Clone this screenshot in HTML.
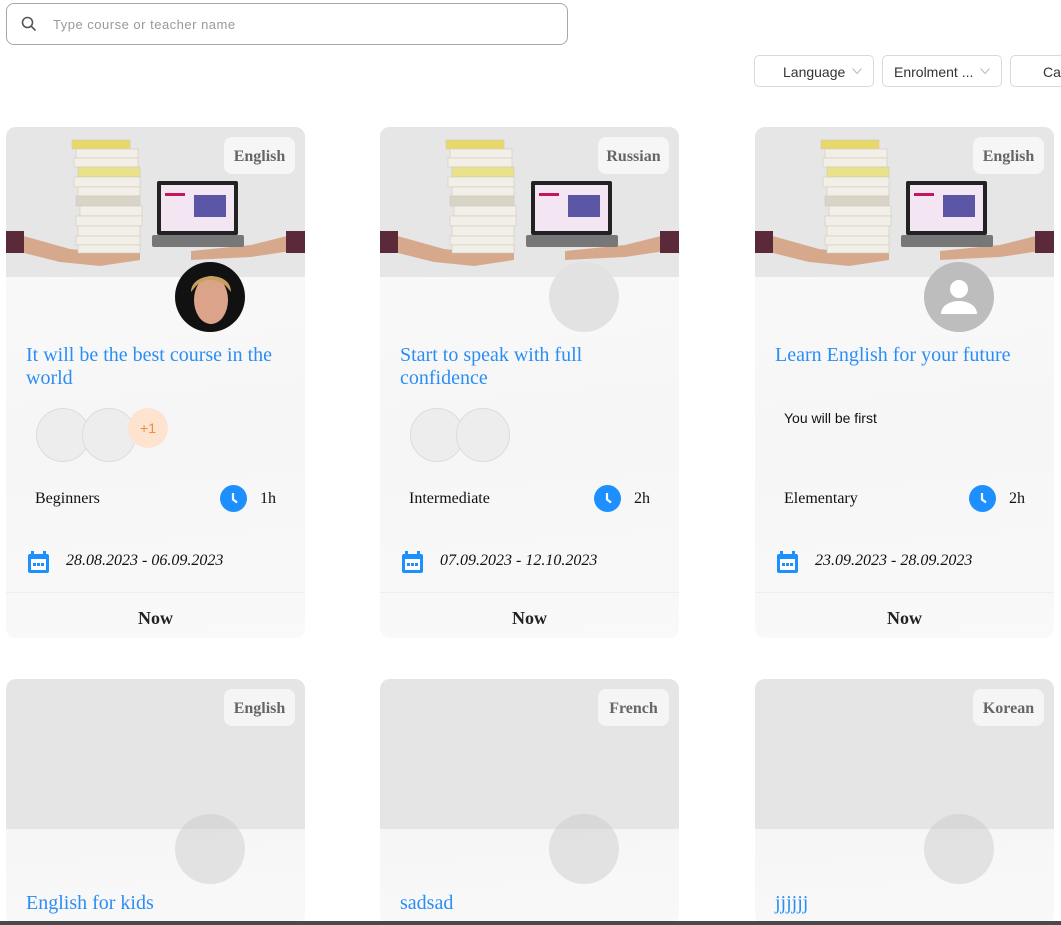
<!DOCTYPE html>
<html style="overflow:hidden;width:1061px;height:925px"><head><meta charset="utf-8"><style>
*{box-sizing:border-box;margin:0;padding:0}
body{width:1061px;height:925px;overflow:hidden;background:#fff;position:relative;font-family:"Liberation Serif",serif}
.search{position:absolute;left:6px;top:3px;width:562px;height:42px;border:1px solid #a8a8a8;border-radius:8px}
.search span{position:absolute;left:46px;top:13px;font:13px "Liberation Sans",sans-serif;color:#999;letter-spacing:.5px}
.sel{position:absolute;top:55px;height:32px;border:1px solid #d9d9d9;border-radius:5px;font:14px "Liberation Sans",sans-serif;color:#333}
.sel span{position:absolute;top:8px}
.card{position:absolute;width:299px;border-radius:10px;overflow:hidden;background:linear-gradient(175deg,#fbfbfb,#f6f6f6 60%,#f9f9f9)}
.img{position:absolute;left:0;top:0;width:299px;height:150px;background:#e5e5e5}
.tag{position:absolute;right:10px;top:10px;width:71px;height:37px;border-radius:8px;background:rgba(248,248,248,.85);font-weight:bold;font-size:16px;color:#666;text-align:center;line-height:39px}
.av{position:absolute;left:169px;top:135px;width:70px;height:70px;border-radius:50%;overflow:hidden}
.title{position:absolute;left:20px;top:217px;width:262px;font-size:20px;line-height:23px;color:#2a8ef5}
.p{position:absolute;top:281px;width:54px;height:54px;border-radius:50%;background:#ededed;border:1.5px solid #dcdcdc}
.lvl{position:absolute;left:29px;top:363px;font-size:16px;color:#111}
.clk{position:absolute;left:214px;top:358px;width:27px;height:27px;border-radius:50%;background:#1e8fff}
.hr{position:absolute;left:254px;top:363px;font-size:16px;color:#111}
.cal{position:absolute;left:22px;top:424px}
.date{position:absolute;left:60px;top:425px;font-size:16px;font-style:italic;color:#111}
.div{position:absolute;left:0;top:465px;width:299px;border-top:1px solid #eee}
.now{position:absolute;left:0;top:481px;width:299px;text-align:center;font-weight:bold;font-size:18px;color:#222}
</style></head><body>
<div class="search"><svg style="position:absolute;left:14px;top:12px" width="16" height="16" viewBox="0 0 16 16"><circle cx="6.5" cy="6.5" r="5" fill="none" stroke="#555" stroke-width="1.6"/><path d="M10.2 10.2L14.5 14.5" stroke="#555" stroke-width="1.6"/></svg><span>Type course or teacher name</span></div>
<div class="sel" style="left:754px;width:120px"><span style="left:28px">Language</span><svg style="position:absolute;left:97px;top:12px" width="10" height="7"><path d="M0.5 0.5L5 5.5L9.5 0.5" fill="none" stroke="#bbb"/></svg></div>
<div class="sel" style="left:882px;width:120px"><span style="left:11px">Enrolment ...</span><svg style="position:absolute;left:97px;top:12px" width="10" height="7"><path d="M0.5 0.5L5 5.5L9.5 0.5" fill="none" stroke="#bbb"/></svg></div>
<div class="sel" style="left:1010px;width:80px"><span style="left:32px">Cat</span></div>

<div class="card" style="left:6px;top:127px;height:511px">
<div class="img"><svg width="299" height="150"><rect width="299" height="150" fill="#e6e6e6"/><path d="M0 108h14l50 14 40 4 30-3v10l-40 6-40-4-40-10H0z" fill="#d6a98d"/><rect x="0" y="104" width="18" height="22" fill="#5a2a3a"/><path d="M299 108h-14l-40 10-60 6v9l60-3 40-6 14-2z" fill="#d6a98d"/><rect x="280" y="104" width="19" height="22" fill="#5a2a3a"/><g fill="#f2efe8" stroke="#cfc9bb" stroke-width=".6"><rect x="66" y="13" width="58" height="9" fill="#e8d86a"/><rect x="70" y="22" width="62" height="9"/><rect x="68" y="31" width="64" height="9"/><rect x="72" y="40" width="62" height="10" fill="#e9e28a"/><rect x="68" y="50" width="66" height="10"/><rect x="72" y="60" width="62" height="9"/><rect x="70" y="69" width="64" height="10" fill="#d9d4c8"/><rect x="74" y="79" width="62" height="10"/><rect x="70" y="89" width="66" height="10"/><rect x="72" y="99" width="62" height="10"/><rect x="70" y="109" width="64" height="9"/><rect x="72" y="118" width="62" height="8"/></g><rect x="151" y="54" width="81" height="54" rx="2" fill="#222"/><rect x="155" y="58" width="73" height="46" fill="#f3e6f2"/><rect x="159" y="66" width="20" height="3" fill="#c2185b"/><rect x="188" y="68" width="32" height="22" fill="#5a55a5"/><rect x="146" y="108" width="92" height="12" rx="2" fill="#777"/></svg></div>
<div class="tag">English</div>
<div class="av"><svg width="70" height="70"><rect width="70" height="70" fill="#111"/><ellipse cx="36" cy="38" rx="17" ry="24" fill="#dba48a"/><path d="M16 30c0-20 40-22 40 0l-5-6c-10-8-22-8-30 0z" fill="#c8a060"/></svg></div>
<div class="title">It will be the best course in the world</div>
<div class="p" style="left:30px"></div><div class="p" style="left:76px"></div>
<div style="position:absolute;left:122px;top:281px;width:40px;height:40px;border-radius:50%;background:#fde3d0;color:#f58a3a;font:14px 'Liberation Sans',sans-serif;text-align:center;line-height:40px">+1</div>
<div class="lvl">Beginners</div><div class="clk"><svg width="27" height="27"><path d="M13 8v6.5l4 3" fill="none" stroke="#fff" stroke-width="2.2"/></svg></div><div class="hr">1h</div>
<svg class="cal" width="21" height="22"><rect x="0" y="3" width="21" height="19" rx="2" fill="#1e8fff"/><rect x="3" y="0" width="3" height="6" fill="#1e8fff"/><rect x="15" y="0" width="3" height="6" fill="#1e8fff"/><rect x="3" y="8" width="15" height="11" fill="#fff"/><rect x="5" y="12" width="3" height="3" fill="#1e8fff"/><rect x="9" y="12" width="3" height="3" fill="#1e8fff"/><rect x="13" y="12" width="3" height="3" fill="#1e8fff"/></svg>
<div class="date">28.08.2023 - 06.09.2023</div><div class="div"></div><div class="now">Now</div>
</div>

<div class="card" style="left:380px;top:127px;height:511px">
<div class="img"><svg width="299" height="150"><rect width="299" height="150" fill="#e6e6e6"/><path d="M0 108h14l50 14 40 4 30-3v10l-40 6-40-4-40-10H0z" fill="#d6a98d"/><rect x="0" y="104" width="18" height="22" fill="#5a2a3a"/><path d="M299 108h-14l-40 10-60 6v9l60-3 40-6 14-2z" fill="#d6a98d"/><rect x="280" y="104" width="19" height="22" fill="#5a2a3a"/><g fill="#f2efe8" stroke="#cfc9bb" stroke-width=".6"><rect x="66" y="13" width="58" height="9" fill="#e8d86a"/><rect x="70" y="22" width="62" height="9"/><rect x="68" y="31" width="64" height="9"/><rect x="72" y="40" width="62" height="10" fill="#e9e28a"/><rect x="68" y="50" width="66" height="10"/><rect x="72" y="60" width="62" height="9"/><rect x="70" y="69" width="64" height="10" fill="#d9d4c8"/><rect x="74" y="79" width="62" height="10"/><rect x="70" y="89" width="66" height="10"/><rect x="72" y="99" width="62" height="10"/><rect x="70" y="109" width="64" height="9"/><rect x="72" y="118" width="62" height="8"/></g><rect x="151" y="54" width="81" height="54" rx="2" fill="#222"/><rect x="155" y="58" width="73" height="46" fill="#f3e6f2"/><rect x="159" y="66" width="20" height="3" fill="#c2185b"/><rect x="188" y="68" width="32" height="22" fill="#5a55a5"/><rect x="146" y="108" width="92" height="12" rx="2" fill="#777"/></svg></div>
<div class="tag">Russian</div>
<div class="av" style="background:#e2e2e2"></div>
<div class="title">Start to speak with full confidence</div>
<div class="p" style="left:30px"></div><div class="p" style="left:76px"></div>
<div class="lvl">Intermediate</div><div class="clk"><svg width="27" height="27"><path d="M13 8v6.5l4 3" fill="none" stroke="#fff" stroke-width="2.2"/></svg></div><div class="hr">2h</div>
<svg class="cal" width="21" height="22"><rect x="0" y="3" width="21" height="19" rx="2" fill="#1e8fff"/><rect x="3" y="0" width="3" height="6" fill="#1e8fff"/><rect x="15" y="0" width="3" height="6" fill="#1e8fff"/><rect x="3" y="8" width="15" height="11" fill="#fff"/><rect x="5" y="12" width="3" height="3" fill="#1e8fff"/><rect x="9" y="12" width="3" height="3" fill="#1e8fff"/><rect x="13" y="12" width="3" height="3" fill="#1e8fff"/></svg>
<div class="date">07.09.2023 - 12.10.2023</div><div class="div"></div><div class="now">Now</div>
</div>

<div class="card" style="left:755px;top:127px;height:511px">
<div class="img"><svg width="299" height="150"><rect width="299" height="150" fill="#e6e6e6"/><path d="M0 108h14l50 14 40 4 30-3v10l-40 6-40-4-40-10H0z" fill="#d6a98d"/><rect x="0" y="104" width="18" height="22" fill="#5a2a3a"/><path d="M299 108h-14l-40 10-60 6v9l60-3 40-6 14-2z" fill="#d6a98d"/><rect x="280" y="104" width="19" height="22" fill="#5a2a3a"/><g fill="#f2efe8" stroke="#cfc9bb" stroke-width=".6"><rect x="66" y="13" width="58" height="9" fill="#e8d86a"/><rect x="70" y="22" width="62" height="9"/><rect x="68" y="31" width="64" height="9"/><rect x="72" y="40" width="62" height="10" fill="#e9e28a"/><rect x="68" y="50" width="66" height="10"/><rect x="72" y="60" width="62" height="9"/><rect x="70" y="69" width="64" height="10" fill="#d9d4c8"/><rect x="74" y="79" width="62" height="10"/><rect x="70" y="89" width="66" height="10"/><rect x="72" y="99" width="62" height="10"/><rect x="70" y="109" width="64" height="9"/><rect x="72" y="118" width="62" height="8"/></g><rect x="151" y="54" width="81" height="54" rx="2" fill="#222"/><rect x="155" y="58" width="73" height="46" fill="#f3e6f2"/><rect x="159" y="66" width="20" height="3" fill="#c2185b"/><rect x="188" y="68" width="32" height="22" fill="#5a55a5"/><rect x="146" y="108" width="92" height="12" rx="2" fill="#777"/></svg></div>
<div class="tag">English</div>
<div class="av" style="background:#bdbdbd"><svg width="70" height="70"><circle cx="35" cy="27" r="9" fill="#fff"/><path d="M17 52c0-9 10-13 18-13s18 4 18 13z" fill="#fff"/></svg></div>
<div class="title">Learn English for your future</div>
<div style="position:absolute;left:29px;top:283px;font:14px 'Liberation Sans',sans-serif;color:#111">You will be first</div>
<div class="lvl">Elementary</div><div class="clk"><svg width="27" height="27"><path d="M13 8v6.5l4 3" fill="none" stroke="#fff" stroke-width="2.2"/></svg></div><div class="hr">2h</div>
<svg class="cal" width="21" height="22"><rect x="0" y="3" width="21" height="19" rx="2" fill="#1e8fff"/><rect x="3" y="0" width="3" height="6" fill="#1e8fff"/><rect x="15" y="0" width="3" height="6" fill="#1e8fff"/><rect x="3" y="8" width="15" height="11" fill="#fff"/><rect x="5" y="12" width="3" height="3" fill="#1e8fff"/><rect x="9" y="12" width="3" height="3" fill="#1e8fff"/><rect x="13" y="12" width="3" height="3" fill="#1e8fff"/></svg>
<div class="date">23.09.2023 - 28.09.2023</div><div class="div"></div><div class="now">Now</div>
</div>

<div class="card" style="left:6px;top:679px;height:246px"><div class="img"></div><div class="tag">English</div><div class="av" style="background:rgba(200,200,200,.45)"></div><div class="title" style="top:213px">English for kids</div></div>
<div class="card" style="left:380px;top:679px;height:246px"><div class="img"></div><div class="tag">French</div><div class="av" style="background:rgba(200,200,200,.45)"></div><div class="title" style="top:213px">sadsad</div></div>
<div class="card" style="left:755px;top:679px;height:246px"><div class="img"></div><div class="tag">Korean</div><div class="av" style="background:rgba(200,200,200,.45)"></div><div class="title" style="top:213px">jjjjjj</div></div>
<div style="position:absolute;left:0;top:921px;width:1061px;height:4px;background:#4a4a4a"></div>
</body></html>
